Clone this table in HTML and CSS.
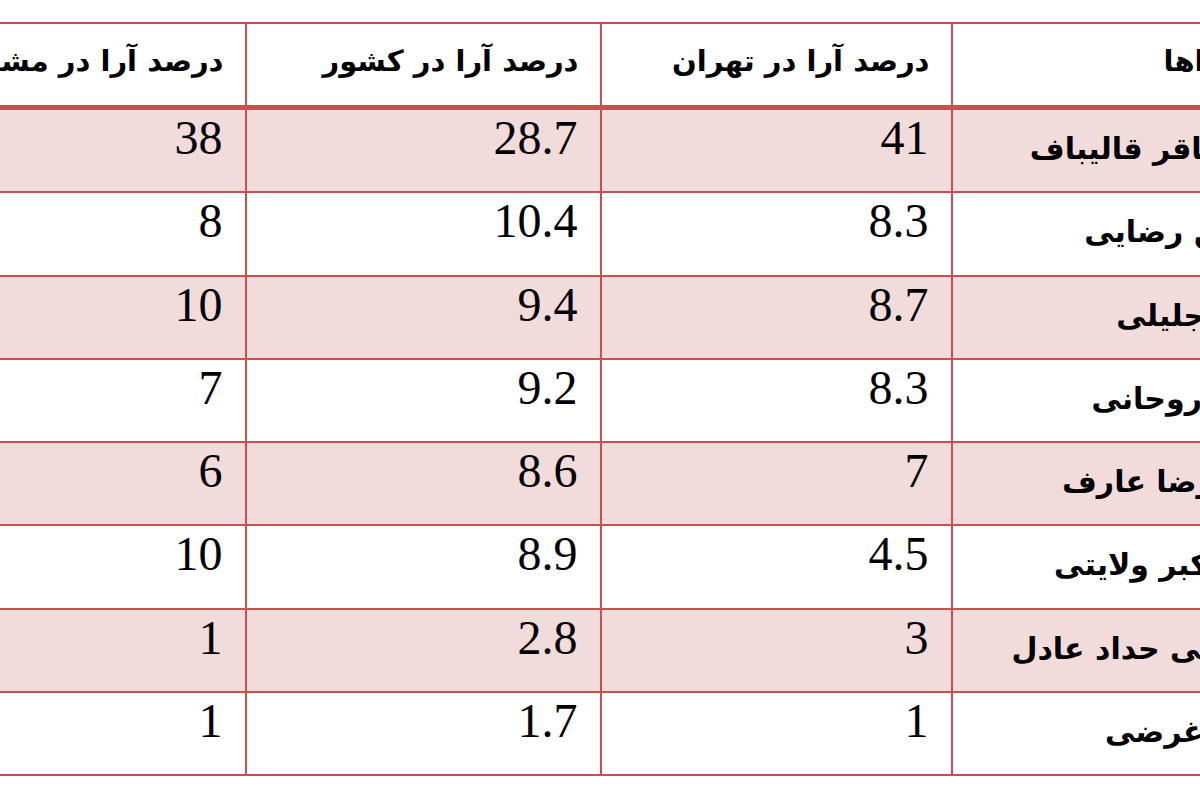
FILE: index.html
```html
<!DOCTYPE html>
<html lang="fa" dir="rtl">
<head>
<meta charset="utf-8">
<title>نظرسنجی</title>
<link rel="stylesheet" href="styles.css">
</head>
<body>
<div class="page">
  <table class="poll">
    <colgroup>
      <col class="c-name">
      <col class="c-teh">
      <col class="c-kes">
      <col class="c-mas">
    </colgroup>
    <thead>
      <tr>
        <th class="hname">کاندیداها</th>
        <th>درصد آرا در تهران</th>
        <th>درصد آرا در کشور</th>
        <th>درصد آرا در مشهد</th>
      </tr>
    </thead>
    <tbody>
      <tr class="band"><td class="name">محمدباقر قالیباف</td><td class="num">41</td><td class="num">28.7</td><td class="num">38</td></tr>
      <tr><td class="name">محسن رضایی</td><td class="num">8.3</td><td class="num">10.4</td><td class="num">8</td></tr>
      <tr class="band"><td class="name">سعید جلیلی</td><td class="num">8.7</td><td class="num">9.4</td><td class="num">10</td></tr>
      <tr><td class="name">حسن روحانی</td><td class="num">8.3</td><td class="num">9.2</td><td class="num">7</td></tr>
      <tr class="band"><td class="name">محمدرضا عارف</td><td class="num">7</td><td class="num">8.6</td><td class="num">6</td></tr>
      <tr><td class="name">علی اکبر ولایتی</td><td class="num">4.5</td><td class="num">8.9</td><td class="num">10</td></tr>
      <tr class="band"><td class="name">غلامعلی حداد عادل</td><td class="num">3</td><td class="num">2.8</td><td class="num">1</td></tr>
      <tr><td class="name">محمد غرضی</td><td class="num">1</td><td class="num">1.7</td><td class="num">1</td></tr>
    </tbody>
  </table>
</div>
</body>
</html>
```

FILE: styles.css
```css
html, body {
  margin: 0;
  padding: 0;
  background: #ffffff;
}

.page {
  width: 1200px;
  height: 800px;
  overflow: hidden;
  display: flex;
  justify-content: center;
  align-items: flex-start;
  padding-top: 22px;
  box-sizing: border-box;
}

.poll {
  flex: none;
  width: 1411px;
  table-layout: fixed;
  border-collapse: separate;
  border-spacing: 0;
  border-top: 2px solid #c9504f;
  color: #000;
}

.c-name { width: 355px; }
.c-teh { width: 351px; }
.c-kes { width: 355px; }
.c-mas { width: 350px; }

.poll th,
.poll td {
  box-sizing: border-box;
  border-left: 2px solid #c9504f;
  border-bottom: 2px solid #c9504f;
  padding: 0 21px 0 0;
  text-align: right;
  vertical-align: top;
  white-space: nowrap;
  overflow: hidden;
}

.poll th {
  height: 86px;
  border-bottom-width: 5px;
  font-family: "DejaVu Sans", sans-serif;
  font-weight: bold;
  font-size: 29px;
  line-height: 36px;
  padding-top: 19px;
}

.poll th.hname {
  padding-right: 18px;
}

.poll td {
  height: 83.25px;
}

.poll tr.band td {
  background: #f2dbdb;
}

.poll td.num {
  font-family: "Liberation Serif", "Times New Roman", serif;
  font-size: 48px;
  line-height: 48px;
  padding-top: 4px;
  padding-right: 22px;
}

.poll td.name {
  font-family: "DejaVu Sans", sans-serif;
  font-weight: bold;
  font-size: 30px;
  line-height: 38px;
  padding-top: 20px;
  padding-right: 14px;
}
```
